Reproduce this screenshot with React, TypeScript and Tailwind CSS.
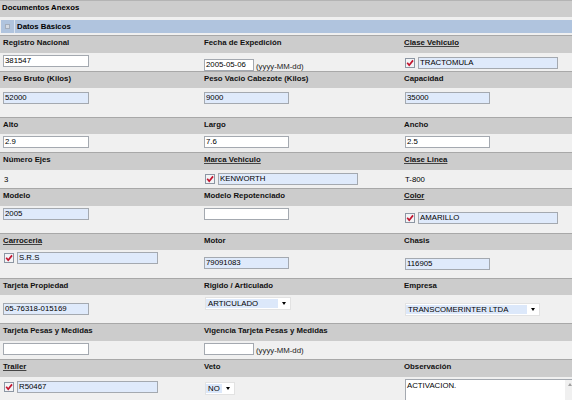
import React from 'react';

const GRID = 'grid grid-cols-[201px_200px_1fr]';

const Check = () => (
  <svg width="10" height="10" viewBox="0 0 10 10" className="shrink-0">
    <rect x="0.5" y="0.5" width="9" height="9" fill="#f3f4f6" stroke="#8c96a3" />
    <path d="M2.2 4.8 L4.2 7.2 L8 2.4" stroke="#c3142e" strokeWidth="1.7" fill="none" />
  </svg>
);

const Inp = ({ v = '', w, blue }: { v?: string; w: string; blue?: boolean }) => (
  <div
    className={`h-[12px] border border-[#a4a9b0] pl-[1px] leading-[10px] whitespace-nowrap overflow-hidden ${w} ${
      blue ? 'bg-[#dfeafb]' : 'bg-white'
    }`}
  >
    {v}
  </div>
);

const Sel = ({ v, w, hw }: { v: string; w: string; hw: string }) => (
  <div className={`flex items-center h-[13px] bg-white border border-[#e2e2e2] ${w}`}>
    <span className={`h-[9px] leading-[9px] bg-[#dce8fa] pl-[2px] whitespace-nowrap ${hw}`}>{v}</span>
    <span className="flex-1 flex justify-center">
      <span className="w-0 h-0 border-l-[2.5px] border-r-[2.5px] border-t-[3px] border-l-transparent border-r-transparent border-t-black" />
    </span>
  </div>
);

const Head = ({ h, children }: { h: string; children: React.ReactNode }) => (
  <div className={`${GRID} ${h} bg-[#cccccc] border-t border-[#a8a8a8] pt-[2px] font-bold text-[#111]`}>
    {children}
  </div>
);

const Val = ({ h, children, extra = '' }: { h: string; children: React.ReactNode; extra?: string }) => (
  <div className={`${GRID} ${h} bg-[#f0f0f0] ${extra}`}>{children}</div>
);

const U = ({ children }: { children: React.ReactNode }) => (
  <span className="underline decoration-[#444] underline-offset-[1px]">{children}</span>
);

const Hint = () => <span className="ml-[2px] text-[#222] leading-[8px]">(yyyy-MM-dd)</span>;

export default function App() {
  return (
    <div className="w-[572px] h-[400px] overflow-hidden bg-[#f0f0f0]">
      <div
        className="w-[590px] text-[7.8px] leading-[9px] text-black"
        style={{ fontFamily: '"Liberation Sans", Arial, sans-serif' }}
      >
        {/* Documentos Anexos */}
        <div className="h-[17px] bg-[#cdcdcd] border-t border-[#b4b4b4] pt-[2px] pl-[2px] font-bold">
          Documentos Anexos
        </div>
        <div className="h-[3px] bg-[#f0f0f0]" />
        <div className="flex h-[13px] bg-[#b0c4de] ml-px">
          <div className="w-[13px] flex items-center justify-center">
            <div className="w-[5px] h-[5px] bg-[#d4dae3] border border-[#a3adbb]" />
          </div>
          <div className="w-px bg-[#dbe4f0]" />
          <div className="pl-[2px] pt-[2px] font-bold">Datos Básicos</div>
        </div>
        <div className="h-[2px] bg-[#f0f0f0]" />

        {/* fila 1 */}
        <Head h="h-[18px]">
          <div className="pl-[3px]">Registro Nacional</div>
          <div className="pl-[3px]">Fecha de Expedición</div>
          <div className="pl-[3px]"><U>Clase Vehiculo</U></div>
        </Head>
        <Val h="h-[18px]">
          <div className="pl-[3px] pt-[2px]"><Inp v="381547" w="w-[86px]" /></div>
          <div className="pl-[3px] pt-[2px] flex items-end"><Inp v="2005-05-06" w="w-[50px]" /><Hint /></div>
          <div className="pl-[4px] pt-[1px] flex items-center gap-[3px]"><Check /><Inp v="TRACTOMULA" w="w-[140px]" blue /></div>
        </Val>

        {/* fila 2 */}
        <Head h="h-[17px]">
          <div className="pl-[3px]">Peso Bruto (Kilos)</div>
          <div className="pl-[3px]">Peso Vacio Cabezote (Kilos)</div>
          <div className="pl-[3px]">Capacidad</div>
        </Head>
        <Val h="h-[29px]">
          <div className="pl-[3px] pt-[4px]"><Inp v="52000" w="w-[86px]" blue /></div>
          <div className="pl-[3px] pt-[4px]"><Inp v="9000" w="w-[85px]" blue /></div>
          <div className="pl-[4px] pt-[4px]"><Inp v="35000" w="w-[85px]" blue /></div>
        </Val>

        {/* fila 3 */}
        <Head h="h-[17px]">
          <div className="pl-[3px]">Alto</div>
          <div className="pl-[3px]">Largo</div>
          <div className="pl-[3px]">Ancho</div>
        </Head>
        <Val h="h-[18px]">
          <div className="pl-[3px] pt-[2px]"><Inp v="2.9" w="w-[86px]" /></div>
          <div className="pl-[3px] pt-[2px]"><Inp v="7.6" w="w-[85px]" /></div>
          <div className="pl-[4px] pt-[2px]"><Inp v="2.5" w="w-[85px]" /></div>
        </Val>

        {/* fila 4 */}
        <Head h="h-[18px]">
          <div className="pl-[3px]">Número Ejes</div>
          <div className="pl-[3px]"><U>Marca Vehiculo</U></div>
          <div className="pl-[3px]"><U>Clase Linea</U></div>
        </Head>
        <Val h="h-[18px]" extra="items-center">
          <div className="pl-[4px]">3</div>
          <div className="pl-[4px] flex items-center gap-[3px]"><Check /><Inp v="KENWORTH" w="w-[140px]" blue /></div>
          <div className="pl-[4px]">T-800</div>
        </Val>

        {/* fila 5 */}
        <Head h="h-[18px]">
          <div className="pl-[3px]">Modelo</div>
          <div className="pl-[3px]">Modelo Repotenciado</div>
          <div className="pl-[3px]"><U>Color</U></div>
        </Head>
        <Val h="h-[27px]">
          <div className="pl-[3px] pt-[2px]"><Inp v="2005" w="w-[86px]" blue /></div>
          <div className="pl-[3px] pt-[2px]"><Inp w="w-[85px]" /></div>
          <div className="pl-[4px] pt-[6px] flex items-center gap-[3px] self-start"><Check /><Inp v="AMARILLO" w="w-[140px]" blue /></div>
        </Val>

        {/* fila 6 */}
        <Head h="h-[17px]">
          <div className="pl-[3px]"><U>Carroceria</U></div>
          <div className="pl-[3px]">Motor</div>
          <div className="pl-[3px]">Chasis</div>
        </Head>
        <Val h="h-[28px]">
          <div className="pl-[4px] pt-[2px] flex items-center gap-[3px] self-start"><Check /><Inp v="S.R.S" w="w-[141px]" blue /></div>
          <div className="pl-[3px] pt-[7px]"><Inp v="79091083" w="w-[85px]" blue /></div>
          <div className="pl-[4px] pt-[8px]"><Inp v="116905" w="w-[85px]" blue /></div>
        </Val>

        {/* fila 7 */}
        <Head h="h-[17px]">
          <div className="pl-[3px]">Tarjeta Propiedad</div>
          <div className="pl-[3px]">Rigido / Articulado</div>
          <div className="pl-[3px]">Empresa</div>
        </Head>
        <Val h="h-[28px]">
          <div className="pl-[3px] pt-[8px]"><Inp v="05-76318-015169" w="w-[86px]" blue /></div>
          <div className="pl-[4px] pt-[2px]"><Sel v="ARTICULADO" w="w-[86px]" hw="w-[72px]" /></div>
          <div className="pl-[4px] pt-[8px]"><Sel v="TRANSCOMERINTER LTDA" w="w-[135px]" hw="w-[121px]" /></div>
        </Val>

        {/* fila 8 */}
        <Head h="h-[18px]">
          <div className="pl-[3px]">Tarjeta Pesas y Medidas</div>
          <div className="pl-[3px]">Vigencia Tarjeta Pesas y Medidas</div>
          <div />
        </Head>
        <Val h="h-[18px]">
          <div className="pl-[3px] pt-[2px]"><Inp w="w-[86px]" /></div>
          <div className="pl-[3px] pt-[2px] flex items-end self-start"><Inp w="w-[50px]" /><Hint /></div>
          <div />
        </Val>

        {/* fila 9 */}
        <Head h="h-[18px]">
          <div className="pl-[3px]"><U>Trailer</U></div>
          <div className="pl-[3px]">Veto</div>
          <div className="pl-[3px]">Observación</div>
        </Head>
        <Val h="h-[30px]">
          <div className="pl-[4px] pt-[4px] flex items-center gap-[3px] self-start"><Check /><Inp v="R50467" w="w-[141px]" blue /></div>
          <div className="pl-[4px] pt-[5px]"><Sel v="NO" w="w-[30px]" hw="w-[16px]" /></div>
          <div className="pl-[4px] pt-[2px]">
            <div className="flex w-[171px] h-[26px] bg-white border border-[#a4a9b0]">
              <div className="flex-1 pl-[1px] pt-px">ACTIVACION.</div>
              <div className="w-[10px] bg-[#f0f0f0] flex justify-center pt-[3px]">
                <span className="w-0 h-0 border-l-[2.5px] border-r-[2.5px] border-b-[3px] border-l-transparent border-r-transparent border-b-[#a0a0a0]" />
              </div>
            </div>
          </div>
        </Val>
      </div>
    </div>
  );
}
